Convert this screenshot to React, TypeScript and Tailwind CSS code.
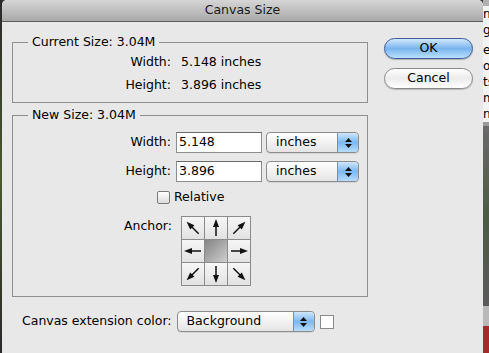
const font = { fontFamily: '"DejaVu Sans", "Lucida Grande", sans-serif' };

const arrows = [-45, 0, 45, -90, null, 90, -135, 180, 135];

const Arrow = ({ angle }: { angle: number }) => (
  <svg width="22" height="22" viewBox="0 0 22 22">
    <g transform={`rotate(${angle} 11 11)`}>
      <line x1="11" y1="19" x2="11" y2="7" stroke="#111" strokeWidth="1.5" />
      <polygon points="11,2 8,10 14,10" fill="#111" />
    </g>
  </svg>
);

const Stepper = () => (
  <div className="flex h-full w-[21px] flex-col items-center justify-center gap-[2px] rounded-r-[4px] border-l border-[#6b8fbf] bg-linear-to-b from-[#cfe6fb] via-[#7db8ef] to-[#b7dcfb]">
    <svg width="7" height="4" viewBox="0 0 7 4"><polygon points="3.5,0 7,4 0,4" fill="#111" /></svg>
    <svg width="7" height="4" viewBox="0 0 7 4"><polygon points="0,0 7,0 3.5,4" fill="#111" /></svg>
  </div>
);

const Popup = ({ label, width }: { label: string; width: string }) => (
  <div className={`flex h-[21px] ${width} items-center rounded-[4px] border border-[#8c8c8c] bg-linear-to-b from-white to-[#e4e4e4] shadow-[0_1px_0_rgba(0,0,0,0.08)]`}>
    <span className="flex-1 pl-[9px] text-[12.5px] leading-none text-black">{label}</span>
    <Stepper />
  </div>
);

const Field = ({ value }: { value: string }) => (
  <div className="flex h-[21px] w-[86px] items-center border border-[#8e8e8e] border-t-[#6a6a6a] bg-white px-[2px] text-[12.5px] text-black">
    {value}
  </div>
);

export default function App() {
  return (
    <div className="flex h-[353px] w-[489px] overflow-hidden bg-[#3a3a3a] text-black" style={font}>
      <div className="w-[2px] bg-linear-to-b from-[#2a2a2a] via-[#4a5a30] to-[#2a2a2a]" />

      <div className="flex w-[481px] flex-col overflow-hidden rounded-t-[5px] bg-[#e8e8e8]">
        <div className="flex h-[22px] items-center justify-center border-b border-[#5c5c5c] bg-linear-to-b from-[#d6d6d6] to-[#a9a9a9] text-[12.5px] text-[#1a1a1a]">
          Canvas Size
        </div>

        <div className="flex pl-[10px]">
          <div className="flex w-[356px] flex-col pt-[12px]">
            <fieldset className="border border-[#8f8f8f] pb-[5px]">
              <legend className="ml-[15px] px-[4px] text-[12.5px] leading-[16px]">Current Size: 3.04M</legend>
              <div className="grid grid-cols-[158px_1fr] items-center gap-x-[10px] pt-[1px] text-[12.5px]">
                <div className="flex h-[23px] items-center justify-end">Width:</div>
                <div>5.148 inches</div>
                <div className="flex h-[23px] items-center justify-end">Height:</div>
                <div>3.896 inches</div>
              </div>
            </fieldset>

            <fieldset className="mt-[4px] border border-[#8f8f8f] pb-[10px]">
              <legend className="ml-[15px] px-[4px] text-[12.5px] leading-[16px]">New Size: 3.04M</legend>
              <div className="flex flex-col pt-[9px] text-[12.5px]">
                <div className="flex h-[21px] items-center">
                  <div className="w-[158px] text-right">Width:</div>
                  <div className="ml-[5px]"><Field value="5.148" /></div>
                  <div className="ml-[4px]"><Popup label="inches" width="w-[93px]" /></div>
                </div>
                <div className="mt-[8px] flex h-[21px] items-center">
                  <div className="w-[158px] text-right">Height:</div>
                  <div className="ml-[5px]"><Field value="3.896" /></div>
                  <div className="ml-[4px]"><Popup label="inches" width="w-[93px]" /></div>
                </div>
                <div className="mt-[9px] flex h-[13px] items-center pl-[144px]">
                  <div className="h-[13px] w-[13px] rounded-[2px] border border-[#7a7a7a] bg-linear-to-b from-white to-[#dcdcdc]" />
                  <span className="ml-[4px]">Relative</span>
                </div>
                <div className="mt-[12px] flex">
                  <div className="w-[159px] pt-[1px] text-right">Anchor:</div>
                  <div className="ml-[9px] grid grid-cols-3 gap-px border border-[#8b8b8b] bg-[#8b8b8b]">
                    {arrows.map((a, i) =>
                      a === null ? (
                        <div key={i} className="h-[22px] w-[22px] bg-linear-to-br from-[#858585] to-[#cfcfcf]" />
                      ) : (
                        <div key={i} className="h-[22px] w-[22px] bg-linear-to-b from-[#f6f6f6] to-[#e2e2e2]">
                          <Arrow angle={a} />
                        </div>
                      )
                    )}
                  </div>
                </div>
              </div>
            </fieldset>

            <div className="mt-[14px] flex items-center pl-[10px] text-[12.5px]">
              <span>Canvas extension color:</span>
              <div className="ml-[5px]"><Popup label="Background" width="w-[138px]" /></div>
              <div className="ml-[5px] h-[14px] w-[14px] border border-[#8a8a8a] bg-white" />
            </div>
          </div>

          <div className="ml-[16px] flex w-[89px] flex-col gap-[9px] pt-[16px] text-[12.5px]">
            <div className="flex h-[21px] items-center justify-center rounded-full border border-[#3e5c95] bg-linear-to-b from-[#d2e8fc] via-[#78b4ee] to-[#b9e0fd] shadow-[0_1px_1px_rgba(0,0,0,0.25)]">
              OK
            </div>
            <div className="flex h-[21px] items-center justify-center rounded-full border border-[#8a8a8a] bg-linear-to-b from-white via-[#ececec] to-white shadow-[0_1px_1px_rgba(0,0,0,0.2)]">
              Cancel
            </div>
          </div>
        </div>
      </div>

      <div className="flex w-[6px] flex-col overflow-hidden">
        <div className="h-[6px] bg-[#b0b0b0]" />
        <div className="flex h-[116px] flex-col bg-[#f2f2f2] text-[12px] leading-[16px]">
          <span className="whitespace-nowrap">ny</span>
          <span className="whitespace-nowrap">ge</span>
          <span className="mt-[4px] whitespace-nowrap">e</span>
          <span className="whitespace-nowrap">o</span>
          <span className="whitespace-nowrap">ts</span>
          <span className="whitespace-nowrap">m</span>
          <span className="whitespace-nowrap">n</span>
        </div>
        <div className="h-[4px] bg-[#9a9a9a]" />
        <div className="h-[180px] bg-linear-to-b from-[#6a6a6a] via-[#4d5a45] to-[#5a5a5a]" />
        <div className="h-[20px] bg-[#b8b8b8]" />
        <div className="flex-1 bg-[#a32a2a]" />
      </div>
    </div>
  );
}
